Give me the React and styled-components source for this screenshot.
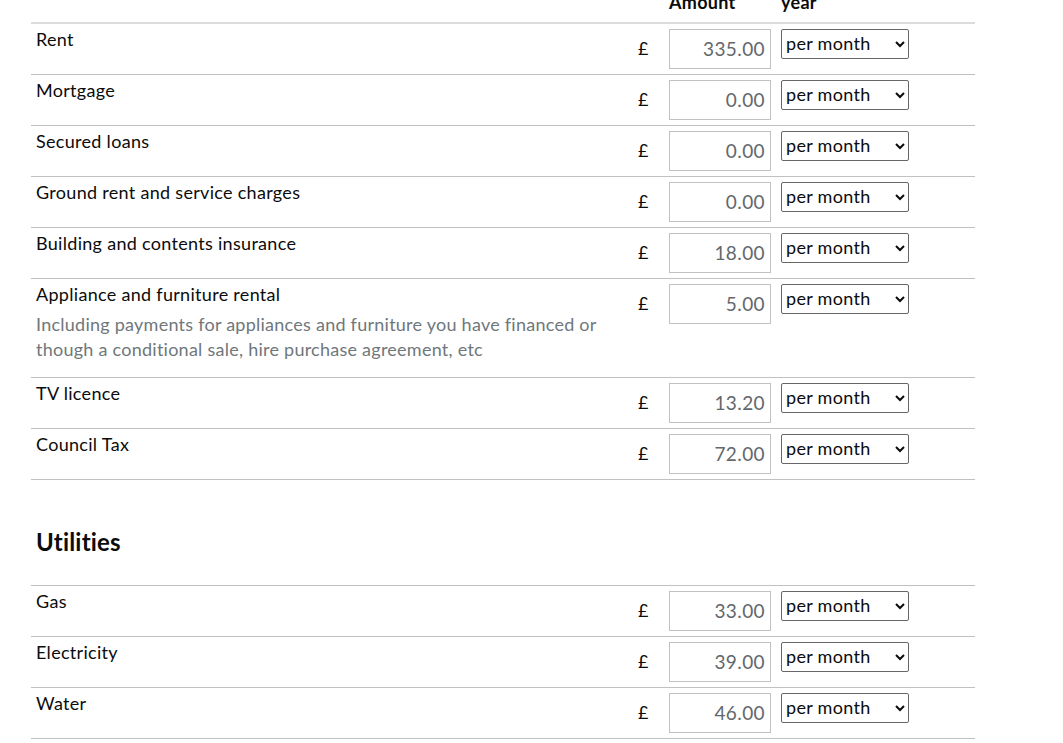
import styled, { createGlobalStyle } from "styled-components";

const GlobalStyle = createGlobalStyle`
  body {
    margin: 0;
    background: #ffffff;
    font-family: Lato, "Noto Sans", Arial, sans-serif;
    color: #0b0c0c;
  }
`;

const Page = styled.div`
  width: 944px;
  padding-left: 31px;
  overflow: hidden;
`;

const Grid = styled.div`
  display: grid;
  grid-template-columns: 1fr 38px 102px 138px 66px;
`;

const HeaderRow = styled(Grid)`
  margin-top: -8px;
  padding-bottom: 10px;
  border-bottom: 2px solid #dcdcdc;
  font-size: 18px;
  font-weight: 700;
  line-height: 20px;
  letter-spacing: 0.3px;
`;

const HeaderCell = styled.div`
  grid-column: ${(p) => p.$col};
  margin-left: ${(p) => p.$offset || 0}px;
`;

const Table = styled.div`
  border-top: ${(p) => (p.$top ? "1px solid #bfc1c3" : "none")};
`;

const Row = styled(Grid)`
  padding: 5px 0;
  border-bottom: 1px solid #bfc1c3;
  align-items: start;
`;

const LabelCell = styled.div`
  padding-left: 5px;
  padding-right: 20px;
`;

const Label = styled.div`
  font-size: 18px;
  line-height: 20px;
  letter-spacing: 0.3px;
`;

const Hint = styled.div`
  margin: 8px 0 10px;
  font-size: 18px;
  line-height: 25px;
  letter-spacing: 0.25px;
  color: #6f777b;
`;

const Pound = styled.div`
  font-size: 18px;
  line-height: 38px;
  padding-left: 7px;
`;

const AmountInput = styled.input`
  box-sizing: border-box;
  width: 102px;
  height: 40px;
  margin: 0;
  padding: 0 5px 2px;
  border: 1px solid #bfc1c3;
  border-radius: 0;
  font-family: inherit;
  font-size: 19px;
  letter-spacing: 0.4px;
  color: #63686c;
  text-align: right;
  background: #fff;
`;

const FrequencySelect = styled.select`
  box-sizing: border-box;
  width: 128px;
  height: 30px;
  margin: 0 0 0 10px;
  padding: 0 0 3px;
  border: 1px solid #666;
  border-radius: 2px;
  font-family: inherit;
  font-size: 18px;
  letter-spacing: 0.3px;
  color: #0b0c0c;
  background: #fff;
`;

const SectionHeading = styled.h2`
  margin: 47px 0 28px 5px;
  font-size: 24px;
  line-height: 30px;
  font-weight: 700;
  letter-spacing: 0.2px;
`;

const housing = [
  { label: "Rent", value: "335.00" },
  { label: "Mortgage", value: "0.00" },
  { label: "Secured loans", value: "0.00" },
  { label: "Ground rent and service charges", value: "0.00" },
  { label: "Building and contents insurance", value: "18.00" },
  {
    label: "Appliance and furniture rental",
    value: "5.00",
    hint: "Including payments for appliances and furniture you have financed or though a conditional sale, hire purchase agreement, etc",
  },
  { label: "TV licence", value: "13.20" },
  { label: "Council Tax", value: "72.00" },
];

const utilities = [
  { label: "Gas", value: "33.00" },
  { label: "Electricity", value: "39.00" },
  { label: "Water", value: "46.00" },
];

const ExpenseRow = ({ item }) => (
  <Row>
    <LabelCell>
      <Label>{item.label}</Label>
      {item.hint && <Hint>{item.hint}</Hint>}
    </LabelCell>
    <Pound>£</Pound>
    <AmountInput type="text" defaultValue={item.value} aria-label={item.label} />
    <FrequencySelect defaultValue="month">
      <option value="week">per week</option>
      <option value="month">per month</option>
      <option value="year">per year</option>
    </FrequencySelect>
  </Row>
);

const App = () => {
  return (
    <Page>
      <GlobalStyle />
      <HeaderRow>
        <HeaderCell $col={3}>Amount</HeaderCell>
        <HeaderCell $col={4} $offset={10}>year</HeaderCell>
      </HeaderRow>
      <Table>
        {housing.map((item) => (
          <ExpenseRow key={item.label} item={item} />
        ))}
      </Table>
      <SectionHeading>Utilities</SectionHeading>
      <Table $top>
        {utilities.map((item) => (
          <ExpenseRow key={item.label} item={item} />
        ))}
      </Table>
    </Page>
  );
};

export default App;
